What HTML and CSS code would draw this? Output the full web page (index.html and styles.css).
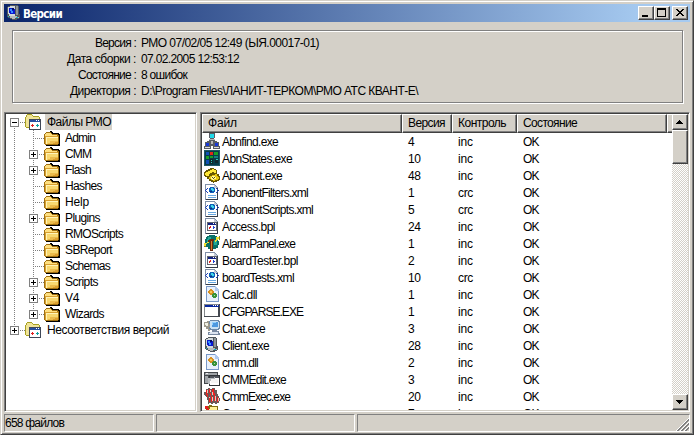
FILE: index.html
```html
<!DOCTYPE html>
<html lang="ru">
<head>
<meta charset="utf-8">
<title>Версии</title>
<link rel="stylesheet" href="styles.css">
</head>
<body>
<svg class="defs" aria-hidden="true">
  <defs>
    <symbol id="folder" viewBox="0 0 16 16">
      <path d="M6 1h2v1h1v1h6v1h1v12H2v-2h12V5H8V3H6z" fill="#000"/>
      <path d="M0 4h1V3h1V2h5v1h1v1h6v1h1v9h-1v1H1v-1H0z" fill="#a07010"/>
      <path d="M1 4h1V3h5v1h1v1h5v1H1z" fill="#ffe080"/>
      <path d="M1 6h13v8H1z" fill="#d8a030"/>
      <path d="M2 7h12v7H2z" fill="#fff4b8"/>
      <path d="M3 8h11v6H3z" fill="#f8d870"/>
      <path d="M6 11h8v3H4v-1h2z" fill="#ecbc4c"/>
      <path d="M11 12h3v2H9v-1h2z" fill="#dca030"/>
    </symbol>
    <symbol id="root" viewBox="0 0 16 16">
      <path d="M0 3h1V1h1V0h5v1h1v1h6v1h1v3h-1v8H1v-1H0z" fill="#a8a020"/>
      <path d="M1 3h1V1h5v1h1v1h6v10H1z" fill="#f0e498"/>
      <path d="M4 5h12v11H4z" fill="#404858"/>
      <path d="M5 8h10v7H5z" fill="#fff"/>
      <path d="M5 6h10v2H5z" fill="#2850a0"/>
      <path d="M11 6h1v1h-1zM13 6h1v1h-1z" fill="#fff"/>
      <path d="M6 11h1v-1h1v1h1v1H8v1H7v-1H6z" fill="#e02020"/>
      <path d="M11 11h1v-1h1v1h1v1h-1v1h-1v-1h-1z" fill="#10a0a0"/>
    </symbol>
    <symbol id="net" viewBox="0 0 16 16">
      <path d="M5 0h6v5h-1v1h1v2h2v1h2v4h1v3H9v-3H7v3H0v-3h1V9h2V8h2V6h1V5H5z" fill="#585c64"/>
      <path d="M6 1h4v4H6z" fill="#20d8e8"/>
      <path d="M5 6h6v1H5zM7 8h2v3H7z" fill="#b8b8b8"/>
      <path d="M2 10h3v3H2zM11 10h3v3h-3z" fill="#1838d8"/>
      <path d="M1 14h5v1H1zM10 14h5v1h-5z" fill="#ddd"/>
    </symbol>
    <symbol id="states" viewBox="0 0 16 16">
      <path d="M0 0h16v16H0z" fill="#205868"/>
      <path d="M1 1h14v14H1z" fill="#083c48"/>
      <path d="M2 2h3v3H2zM2 10h3v4H2z" fill="#1050b8"/>
      <path d="M6 2h3v3H6z" fill="#e02818"/><path d="M10 2h4v3h-4zM2 6h3v3H2zM6 6h3v2H6z" fill="#18a028"/>
      <path d="M10 6h4v2h-4z" fill="#108080"/><path d="M6 9h3v5H6zM11 10h3v3h-3z" fill="#10282c"/>
      <path d="M7 10h1v1H7zM7 12h1v1H7zM12 9h2v1h-2z" fill="#30c8b8"/>
    </symbol>
    <symbol id="phone" viewBox="0 0 16 16">
      <path d="M1 4h1V3h2V2h2V1h4v1h2v1h1v4h2v2h1v4h-1v1h-2v1h-3v1H9v-1H7v-1H5v-2H3v-2H1V9H0V5h1z" fill="#685800"/>
      <path d="M2 5h2V4h2V3h2V2h2v1h2v3h-2V5H8v1H6v1H5v2H2V8H1V6h1z" fill="#ffe838"/>
      <path d="M5 10h1V9h2V8h3V7h2v2h1v1h1v2h-1v1h-3v1H9v-1H7v-1H5z" fill="#e8c810"/>
      <path d="M8 9h3v1h1v2h-2v1H8v-1H7v-2h1z" fill="#fff8a0"/><path d="M8 10h1v1H8zM10 10h1v1h-1zM9 12h1v-1H9z" fill="#685800"/>
    </symbol>
    <symbol id="page" viewBox="0 0 16 16">
      <path d="M1 0h10v1h1v1h1v1h1v13H1z" fill="#8090a8"/>
      <path d="M2 1h8v3h3v11H2z" fill="#fff"/><path d="M10 1h1v1h1v1h1v1h-3z" fill="#c0c8d4"/>
      <path d="M13 4h1v12h-1zM2 15h12v1H2z" fill="#343c48"/>
    </symbol>
    <symbol id="xml" viewBox="0 0 16 16">
      <use href="#page"/>
      <path d="M3 4h1v1H3v1H2v1h1v1h1v1H3V8H2V7H1V6h1V5h1zM12 4h1v1h1v1h1v1h-1v1h-1v1h-1V8h1V7h1V6h-1V5h-1z" fill="#2040b8"/>
      <path d="M6 3h4v1h1v4h-1v1H6V8H5V4h1z" fill="#1060b8"/><path d="M7 4h2v1h1v2H8V6H7z" fill="#40d8e8"/><path d="M6 7h2v1H6z" fill="#083080"/>
      <path d="M4 11h8v1H4zM4 13h8v1H4z" fill="#68a8e0"/>
    </symbol>
    <symbol id="bpl" viewBox="0 0 16 16">
      <use href="#page"/>
      <path d="M3 4h10v9H3z" fill="#606470"/><path d="M4 7h8v5H4z" fill="#fff"/><path d="M4 5h8v2H4z" fill="#102080"/><path d="M9 5h1v1H9zM11 5h1v1h-1z" fill="#fff"/>
      <path d="M5 9h1V8h1v2H6v1H5z" fill="#e02020"/><path d="M9 8h1v1h1v1h-1v1H9z" fill="#2040d0"/>
    </symbol>
    <symbol id="alarm" viewBox="0 0 16 16">
      <path d="M3 1h2V0h6v1h2v2h1v3h1v4h-1v3h-2v1H4v-2H2v-2H1V4h1V2h1z" fill="#087068"/>
      <path d="M4 2h3v2H5v3H3V4h1zM10 5h3v5h-3z" fill="#20a898"/>
      <path d="M6 4h4v2H9v10H6V7H4V5h2z" fill="#6c2c10"/><path d="M7 6h1v9H7z" fill="#d08030"/>
      <path d="M12 2h3v2h-1v1h-1v1h-1v1h-1V5h1zM0 8h3V7h2v1H3v1H2v2H0z" fill="#f0e030"/><path d="M15 1h1v4h-1zM0 11h2v1H0z" fill="#8c8018"/>
    </symbol>
    <symbol id="dll" viewBox="0 0 16 16">
      <path d="M2 0h9l4 4v12H2z" fill="#7898c8"/><path d="M3 1h8v3h3v11H3z" fill="#e8f0fc"/><path d="M11 0h1v1h1v1h1v1h1v2h-4z" fill="#b0c8ec"/>
      <path d="M5 4h1V3h2v1h1v1h1v2H9v1H8v1H6V8H5V7H4V5h1z" fill="#d89020"/><path d="M6 5h2v2H6z" fill="#f4c858"/>
      <path d="M9 7h3v1h1v3h-1v1H9v-1H8V8h1z" fill="#38923c"/><path d="M10 9h1v1h-1z" fill="#b8e0a0"/>
    </symbol>
    <symbol id="app" viewBox="0 0 16 16">
      <path d="M0 1h16v13H0z" fill="#444850"/><path d="M1 2h13v11H1z" fill="#fff"/><path d="M1 2h14v2H1z" fill="#0828a0"/>
      <path d="M9 2h1v1H9zM11 2h1v1h-1zM13 2h1v1h-1z" fill="#fff"/><path d="M0 1h15v1H0zM0 2h1v11H0z" fill="#84888c"/>
    </symbol>
    <symbol id="chat" viewBox="0 0 16 16">
      <path d="M6 0h9v1h1v8h-1v1H6V9H5V1h1z" fill="#6c88a8"/><path d="M6 1h8v1h1v6h-1v1H7V8H6z" fill="#c8e0f4"/><path d="M8 2h6v5H8z" fill="#4c98e0"/><path d="M8 2h4v1H9v2H8z" fill="#90d0ff"/>
      <path d="M0 2h3V1h2v3h1v3H5v2h1v2H4V9H2V7H0z" fill="#9c988c"/><path d="M1 3h3v3H2V5H1z" fill="#f0f0e4"/>
      <path d="M8 10h5v1h2v2h1v2H4v-3h4z" fill="#7888a0"/><path d="M6 12h8v2H5v-1h1z" fill="#dce4f0"/>
    </symbol>
    <symbol id="client" viewBox="0 0 16 16">
      <path d="M1 2h1V1h2V0h8v1h1v8h1v4h-1v1h-2v1H6v-1H4v-1H2v-1H1z" fill="#50565c"/>
      <path d="M2 2h2V1h5v10H3V9H2z" fill="#d0d8dc"/><path d="M10 1h2v9h-2z" fill="#8c9498"/>
      <path d="M3 3h5v1h1v5H4V8H3z" fill="#0818d0"/><path d="M4 4h2v2h1v2H5V6H4z" fill="#3890ff"/><path d="M6 3h2v2H6z" fill="#000868"/>
      <path d="M4 11h7v1h2v1H9v1H6v-1H4z" fill="#b8bcbc"/><path d="M10 12h2v1h-2zM2 11h1v1H2z" fill="#18b8c8"/>
    </symbol>
    <symbol id="edit" viewBox="0 0 16 16">
      <path d="M0 1h14v12H0z" fill="#44484c"/><path d="M1 2h12v2H1zM1 5h3v7H1z" fill="#a0a4a8"/><path d="M2 2h2v1H2z" fill="#eee"/>
      <path d="M5 4h11v11H5z" fill="#303438"/><path d="M6 7h9v7H6z" fill="#fff"/><path d="M6 5h9v2H6z" fill="#50545c"/><path d="M4 7h6V6h1v4H6v3H4z" fill="#b4b8bc"/><path d="M7 8h7v4H7z" fill="#f4f4f4"/>
    </symbol>
    <symbol id="exec" viewBox="0 0 16 16">
      <path d="M2 1h2V0h2v1h2V0h3v2h2v4h1v2h1v2h1v3h-1v2h-2v1h-2v-1H9v1H7v-1H5v1H4v-4H3V9H2V8H1V7H0V4h2z" fill="#6c5858"/>
      <path d="M2 2h1v4h1v3H3V7H2zM5 1h1v4h1v3H6V5H5zM8 1h2v4h1v2H9V4H8zM5 10h1v4H5zM7 8h1v6H7zM10 7h1v6h-1zM13 9h1v5h-1z" fill="#f02020"/>
      <path d="M3 2h1v3H3zM6 2h1v2H6zM8 4h1v3H8zM5 9h1v1H5zM8 9h1v4H8zM11 8h1v5h-1zM14 10h1v3h-1z" fill="#f4c0b8"/>
    </symbol>
    <symbol id="explorer" viewBox="0 0 16 16">
      <path d="M2 1h3V0h3v1h6v15H2z" fill="#806c10"/><path d="M6 2h7v12H5V4h1z" fill="#fff098"/><path d="M1 1h3v2h1v4H3V4H1z" fill="#e02020"/>
    </symbol>
  </defs>
</svg>

<div class="window">
  <header class="titlebar">
    <svg class="icon"><use href="#client"/></svg>
    <h1 class="fit" data-w="39">Версии</h1>
    <div class="controls">
      <button class="ctl" aria-label="Свернуть"><svg viewBox="0 0 16 14"><path d="M4 9h6v2H4z"/></svg></button>
      <button class="ctl" aria-label="Развернуть"><svg viewBox="0 0 16 14"><path d="M3 2h9v9H3zM4 4v6h7V4z" fill-rule="evenodd"/></svg></button>
      <button class="ctl ctl-close" aria-label="Закрыть"><svg viewBox="0 0 16 14"><path d="M4 3h2v1h1v1h2V4h1V3h2v1h-1v1h-1v1H9v1h1v1h1v1h1v1h-2V9H9V8H7v1H6v1H4V9h1V8h1V7h1V6H6V5H5V4H4z"/></svg></button>
    </div>
  </header>

  <section class="info">
    <div class="label"><span class="fit" data-w="41">Версия :</span></div><div><span class="fit" data-w="178">РМО 07/02/05 12:49 (ЫЯ.00017-01)</span></div>
    <div class="label"><span class="fit" data-w="69">Дата сборки :</span></div><div><span class="fit" data-w="98">07.02.2005 12:53:12</span></div>
    <div class="label"><span class="fit" data-w="58">Состояние :</span></div><div><span class="fit" data-w="46">8 ошибок</span></div>
    <div class="label"><span class="fit" data-w="66">Директория :</span></div><div><span class="fit" data-w="277">D:\Program Files\ЛАНИТ-ТЕРКОМ\РМО АТС КВАНТ-Е\</span></div>
  </section>

  <main class="panes">
    <div class="sunken tree" id="tree"></div>
    <div class="sunken list">
      <div class="content">
        <div class="cols head">
          <div><span class="fit" data-w="29">Файл</span></div><div><span class="fit" data-w="37">Версия</span></div><div><span class="fit" data-w="48">Контроль</span></div><div><span class="fit" data-w="54">Состояние</span></div><div></div>
        </div>
        <div id="rows" class="rows"></div>
      </div>
      <div class="scrollbar">
        <div class="sbtn"><svg viewBox="0 0 16 16"><path d="M7 6h1v1h1v1h1v1h1v1H4V9h1V8h1V7h1z"/></svg></div>
        <div class="sbtn thumb"></div>
        <div class="track"></div>
        <div class="sbtn"><svg viewBox="0 0 16 16"><path d="M4 6h7v1h-1v1H9v1H8v1H7V9H6V8H5V7H4z"/></svg></div>
      </div>
    </div>
  </main>

  <footer class="status">
    <div><span class="fit" data-w="59">658 файлов</span></div><div></div>
    <div class="last"><svg class="grip" viewBox="0 0 13 13"><path d="M0 13L13 0M4 13l9-9M8 13l5-5" stroke="#fff"/><path d="M1 13L13 1M2 13L13 2M5 13l8-8M6 13l7-7M9 13l4-4M10 13l3-3" stroke="#808080"/></svg></div>
  </footer>
</div>
<script src="app.js"></script>
</body>
</html>
```

FILE: styles.css
```css
* { box-sizing: border-box; }
body {
  margin: 0;
  font: 12px/16px "Liberation Sans", Arial, sans-serif;
  color: #000;
  background: #d4d0c8;
  overflow: hidden;
}
.defs { display: none; }
svg { display: block; shape-rendering: crispEdges; }
.icon { width: 16px; height: 16px; flex: none; }
.fit { display: inline-block; white-space: pre; }

.window {
  width: 694px;
  height: 435px;
  border: 1px solid;
  border-color: #d4d0c8 #404040 #404040 #d4d0c8;
  box-shadow: inset 1px 1px #fff, inset -1px -1px #808080;
  padding: 3px;
  background: #d4d0c8;
  display: flex;
  flex-direction: column;
}
.titlebar {
  height: 18px;
  flex: none;
  width: 686px;
  display: flex;
  align-items: center;
  padding: 0 2px;
  background: linear-gradient(90deg, #0a246a, #a6caf0 640px);
}
.titlebar h1 {
  margin: 1px 0 0 1px;
  color: #fff;
  font: bold 11.5px/18px "DejaVu Sans Condensed", "DejaVu Sans", sans-serif;
}
.controls { display: flex; margin-left: auto; }
.ctl, .sbtn {
  background: #d4d0c8;
  border: 1px solid;
  border-color: #fff #404040 #404040 #fff;
  box-shadow: inset -1px -1px #808080;
  padding: 0;
}
.ctl { width: 16px; height: 14px; }
.ctl svg { width: 16px; height: 14px; margin: -1px; }
.ctl-close { margin-left: 2px; }

.info {
  margin: 8px 7px 8px 8px;
  width: 671px;
  height: 73px;
  flex: none;
  border: 1px solid #808080;
  box-shadow: inset 1px 1px #fff, 1px 1px #fff;
  display: grid;
  grid-template-columns: 123px 1fr;
  grid-auto-rows: 16px;
  column-gap: 5px;
  padding-top: 4px;
}
.label { text-align: right; }

.panes {
  margin-top: 1px;
  height: 300px;
  flex: none;
  display: grid;
  grid-template-columns: 193px 490px;
  column-gap: 3px;
}
.sunken {
  background: #fff;
  border: 1px solid;
  border-color: #808080 #fff #fff #808080;
  box-shadow: inset 1px 1px #404040, inset -1px -1px #d4d0c8;
  padding: 1px;
  overflow: hidden;
}
.node { display: flex; height: 16px; }
.gutter { width: 19px; height: 16px; flex: none; }
.node .icon { margin-right: 3px; }
.node .fit { padding: 0 1px 0 2px; }
.root-node .fit { margin-left: 1px; }
.selected .fit { background: #d4d0c8; }
.dots { stroke: #808080; stroke-dasharray: 1 1; fill: none; }
.box { fill: #fff; stroke: #808080; }
.sign { stroke: #000; }

.list { display: flex; }
.content { flex: 1; overflow: hidden; }
.cols { display: grid; grid-template-columns: 200px 50px 65px 150px 1fr; }
.head { height: 17px; }
.head > div {
  background: #d4d0c8;
  border: 1px solid;
  border-color: #fff #404040 #404040 #fff;
  box-shadow: inset -1px -1px #808080;
  padding-left: 5px;
  line-height: 17px;
}
.head > div:last-child { border-right: 0; box-shadow: inset 0 -1px #808080; }
.rows { padding-top: 2px; }
.row { height: 17px; line-height: 18px; }
.row > div { padding-left: 6px; }
.row > .name { display: flex; padding-left: 2px; gap: 2px; }
.scrollbar { width: 16px; display: flex; flex-direction: column; }
.sbtn { height: 16px; flex: none; }
.sbtn svg { width: 16px; height: 16px; margin: -1px; }
.thumb { height: 34px; }
.track {
  flex: 1;
  background: repeating-conic-gradient(#d4d0c8 0 25%, #fff 0 50%) 0 0 / 2px 2px;
}

.status {
  margin-top: 2px;
  height: 17px;
  display: grid;
  grid-template-columns: 150px 199px 333px;
  column-gap: 2px;
}
.status > div {
  border: 1px solid;
  border-color: #808080 #fff #fff #808080;
  line-height: 16px;
}
.status .last { display: flex; justify-content: flex-end; align-items: flex-end; }
.grip { width: 13px; height: 13px; }
```

FILE: app.js
```js
const tree = [
  ['Файлы РМО', 0, '-', 64], ['Admin', 1, '', 30], ['CMM', 1, '+', 26], ['Flash', 1, '+', 26],
  ['Hashes', 1, '', 37], ['Help', 1, '', 24], ['Plugins', 1, '+', 35], ['RMOScripts', 1, '', 58],
  ['SBReport', 1, '', 47], ['Schemas', 1, '', 45], ['Scripts', 1, '+', 33], ['V4', 1, '+', 14],
  ['Wizards', 1, '+', 39], ['Несоответствия версий', 0, '+', 122]
];
const files = [
  ['net', 'Abnfind.exe', 56, '4', 'inc'], ['states', 'AbnStates.exe', 70, '10', 'inc'],
  ['phone', 'Abonent.exe', 60, '48', 'inc'], ['xml', 'AbonentFilters.xml', 86, '1', 'crc'],
  ['xml', 'AbonentScripts.xml', 91, '5', 'crc'], ['bpl', 'Access.bpl', 53, '24', 'inc'],
  ['alarm', 'AlarmPanel.exe', 73, '1', 'inc'], ['bpl', 'BoardTester.bpl', 76, '2', 'inc'],
  ['xml', 'boardTests.xml', 72, '10', 'crc'], ['dll', 'Calc.dll', 35, '1', 'inc'],
  ['app', 'CFGPARSE.EXE', 81, '1', 'inc'], ['chat', 'Chat.exe', 43, '3', 'inc'],
  ['client', 'Client.exe', 47, '28', 'inc'], ['dll', 'cmm.dll', 36, '2', 'inc'],
  ['edit', 'CMMEdit.exe', 64, '3', 'inc'], ['exec', 'CmmExec.exe', 68, '20', 'inc'],
  ['explorer', 'CmmExplorer.exe', 83, '7', 'inc']
];

function gutter(paths, sign) {
  const box = sign
    ? `<rect class="box" x="4.5" y="4.5" width="8" height="8"/><path class="sign" d="M6 8.5h5${sign === '+' ? 'M8.5 6v5' : ''}"/>`
    : '';
  return `<svg class="gutter" viewBox="0 0 19 16"><path class="dots" d="${paths}"/>${box}</svg>`;
}

document.getElementById('tree').innerHTML = tree.map(([text, level, sign, w], i) => {
  let g = '';
  if (level) g += gutter('M8.5 0v16', '');
  const end = i === tree.length - 1;
  const up = i === 0 ? 8 : 0;
  const down = end || i === tree.length - 2 ? 8 : 16;
  g += gutter(`M8.5 ${up}V${down}M8 8.5h11`, sign);
  return `<div class="node ${level ? '' : 'root-node'} ${i ? '' : 'selected'}">${g}<svg class="icon"><use href="#${level ? 'folder' : 'root'}"/></svg><span class="fit" data-w="${w}">${text}</span></div>`;
}).join('');

document.getElementById('rows').innerHTML = files.map(([icon, name, w, ver, ctl]) =>
  `<div class="cols row"><div class="name"><svg class="icon"><use href="#${icon}"/></svg><span class="fit" data-w="${w}">${name}</span></div><div><span class="fit" data-w="${ver.length * 6.3}">${ver}</span></div><div><span class="fit" data-w="15">${ctl}</span></div><div><span class="fit" data-w="15.5">OK</span></div></div>`
).join('');

document.querySelectorAll('.fit').forEach(el => {
  const range = document.createRange();
  range.selectNodeContents(el);
  const n = el.textContent.length;
  el.style.letterSpacing = (Number(el.dataset.w) - range.getBoundingClientRect().width) / n + 'px';
});
```
